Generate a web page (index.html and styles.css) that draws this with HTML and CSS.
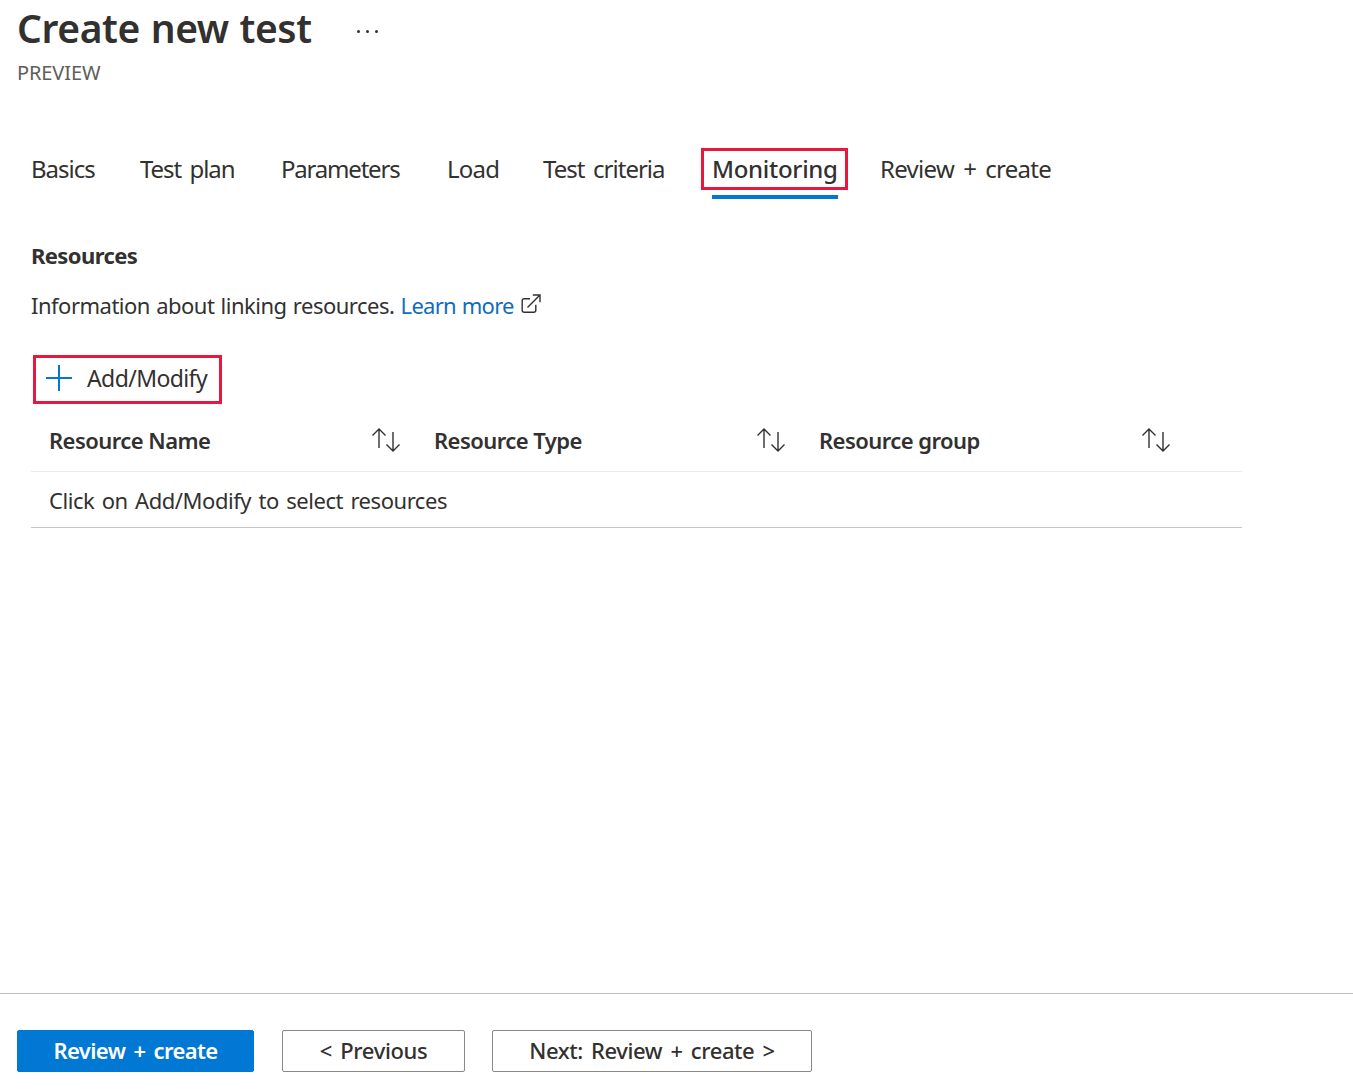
FILE: index.html
```html
<!DOCTYPE html>
<html lang="en">
<head>
<meta charset="utf-8">
<title>Create new test</title>
<link rel="stylesheet" href="styles.css">
</head>
<body>
<div class="page">
  <header class="head">
    <div class="title-row">
      <h1 class="title">Create new test</h1>
      <span class="more" aria-label="More"><i></i><i></i><i></i></span>
    </div>
    <div class="subtitle">PREVIEW</div>
  </header>
  <main class="main">
    <nav class="tabs">
      <a class="tab t-basics">Basics</a>
      <a class="tab t-plan">Test plan</a>
      <a class="tab t-params">Parameters</a>
      <a class="tab t-load">Load</a>
      <a class="tab t-criteria">Test criteria</a>
      <a class="tab t-mon active"><span class="mon-text">Monitoring</span></a>
      <a class="tab t-review">Review + create</a>
    </nav>
    <h2 class="section">Resources</h2>
    <p class="info">Information about linking resources. <a class="link">Learn more</a>
      <svg class="ext" viewBox="0 0 20 20" width="20" height="20" fill="none" stroke="#323130" stroke-width="1.4"><path d="M9 4.700H3.200a2 2 0 0 0-2 2v9.600a2 2 0 0 0 2 2h9.600a2 2 0 0 0 2-2v-5.600"/><path d="M6.500 13.500 18.700 1.300M11.800 1h7.200v7.200"/></svg>
    </p>
    <button class="add" type="button">
      <svg class="plus" viewBox="0 0 28 28" width="28" height="28" stroke="#0078d4" stroke-width="2" fill="none"><path d="M14 1v26M1 14h26"/></svg>
      <span>Add/Modify</span>
    </button>
    <div class="table">
      <div class="row head-row">
        <div class="cell"><span>Resource Name</span><svg class="sort" viewBox="0 0 30 24" width="30" height="24" fill="none" stroke="#323130" stroke-width="1.4"><path d="M8 20V1M1.500 7.500 8 1l6.500 6.500M22 4v19M15.500 16.500 22 23l6.500-6.500"/></svg></div>
        <div class="cell"><span>Resource Type</span><svg class="sort" viewBox="0 0 30 24" width="30" height="24" fill="none" stroke="#323130" stroke-width="1.4"><path d="M8 20V1M1.500 7.500 8 1l6.500 6.500M22 4v19M15.500 16.500 22 23l6.500-6.500"/></svg></div>
        <div class="cell"><span>Resource group</span><svg class="sort" viewBox="0 0 30 24" width="30" height="24" fill="none" stroke="#323130" stroke-width="1.4"><path d="M8 20V1M1.500 7.500 8 1l6.500 6.500M22 4v19M15.500 16.500 22 23l6.500-6.500"/></svg></div>
      </div>
      <div class="row empty-row">Click on Add/Modify to select resources</div>
    </div>
  </main>
  <footer class="foot">
    <button class="btn primary" type="button">Review + create</button>
    <button class="btn prev" type="button">&lt; Previous</button>
    <button class="btn next" type="button">Next: Review + create &gt;</button>
  </footer>
</div>
</body>
</html>
```
FILE: styles.css
```css
* { box-sizing: border-box; }
html, body { margin: 0; padding: 0; background: #fff; }
body { font-family: "Noto Sans", "Open Sans", sans-serif; color: #323130; }
.page { height: 1092px; display: flex; flex-direction: column; overflow: hidden; }

.head { padding: 0 0 0 17px; }
.title-row { display: flex; align-items: center; height: 60px; }
.title { margin: 0 0 4px; width: 340px; font-size: 39px; line-height: 56px; font-weight: 600; letter-spacing: -.4px; word-spacing: 1px; }
.more { display: flex; gap: 6px; margin-top: 2px; }
.more i { width: 3px; height: 3px; border-radius: 50%; background: #323130; }
.subtitle { font-size: 20px; line-height: 26px; color: #605e5c; letter-spacing: -.1px; }

.main { flex: 1; padding: 62px 0 0 31px; }
.tabs { display: flex; height: 52px; }
.tab { display: block; font-size: 24px; line-height: 42px; height: 42px; letter-spacing: -1px; word-spacing: 3.5px; white-space: nowrap; }
.t-basics { width: 109px; }
.t-plan { width: 141px; letter-spacing: -1.1px; }
.t-params { width: 166px; letter-spacing: -1.2px; }
.t-load { width: 96px; letter-spacing: -.75px; }
.t-criteria { width: 158px; }
.t-mon { width: 179px; letter-spacing: -.3px; }
.t-review { width: 180px; letter-spacing: -.7px; }
.active { position: relative; font-weight: 500; }
.mon-text { display: block; width: 147px; height: 42px; border: 3px solid #e8183d; padding-left: 8px; line-height: 36px; }
.active::after { content: ""; position: absolute; left: 11px; top: 47px; width: 126px; height: 4px; background: #0078d4; }

.section { margin: 0; padding-top: 40px; font-size: 22px; line-height: 30px; font-weight: 700; letter-spacing: -.6px; }
.info { margin: 0; padding-top: 20px; font-size: 22px; line-height: 30px; display: flex; align-items: center; letter-spacing: -.5px; word-spacing: 1px; white-space: pre; }
.link { color: #0f6cbd; letter-spacing: -.75px; }
.ext { margin-left: 7px; margin-top: -2px; }

.add { display: flex; align-items: center; width: 189px; height: 49px; margin: 35px 0 0 2px; padding: 0 0 3px 9px; border: 3px solid #e8183d; background: #fff; font: inherit; color: #323130; font-size: 23px; letter-spacing: -.6px; }
.plus { margin-right: 14px; flex: none; }

.table { width: 1211px; margin-top: 10px; }
.row { display: flex; }
.head-row { height: 58px; padding-bottom: 6px; border-bottom: 1px solid #edebe9; align-items: center; }
.cell { width: 385px; padding-left: 18px; display: flex; align-items: center; font-size: 22px; font-weight: 600; letter-spacing: -.55px; }
.cell span { width: 322px; }
.sort { flex: none; margin-top: 1px; }
.empty-row { height: 56px; border-bottom: 1px solid #c8c6c4; padding-left: 18px; align-items: center; font-size: 22px; letter-spacing: -.45px; word-spacing: 2.1px; }

.foot { height: 99px; flex: none; border-top: 1px solid #bdbdbd; padding: 36px 0 0 17px; display: flex; align-items: flex-start; }
.btn { height: 42px; font: inherit; font-size: 22px; font-weight: 500; border-radius: 2px; padding: 0 0 2px; letter-spacing: -.6px; word-spacing: 3px; }
.primary { width: 237px; background: #0078d4; border: 1px solid #0078d4; color: #fff; font-weight: 600; margin-right: 28px; }
.prev { width: 183px; background: #fff; border: 1px solid #8a8886; color: #323130; margin-right: 27px; letter-spacing: -.35px; }
.next { width: 320px; background: #fff; border: 1px solid #8a8886; color: #323130; letter-spacing: -.42px; }
```
